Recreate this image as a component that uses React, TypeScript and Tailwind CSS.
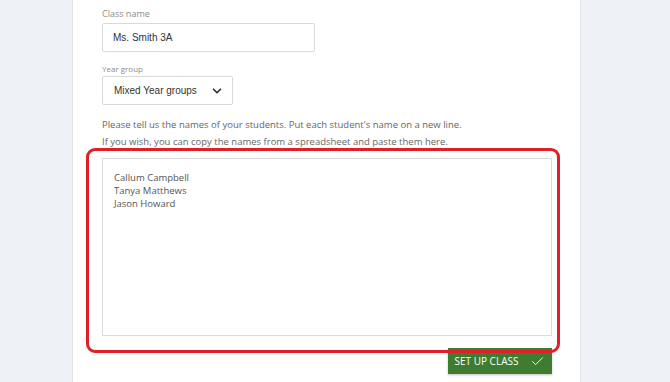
import { ChevronDown, Check } from "lucide-react";

const Names = ["Callum Campbell", "Tanya Matthews", "Jason Howard"];

export default function App() {
  return (
    <div className="h-[382px] w-[670px] overflow-hidden bg-[#eef2f6] pl-[72px] font-['Open_Sans',sans-serif]">
      <div className="relative h-[382px] w-[509px] border-x border-[#dfe4e8] bg-white px-[29px] pt-[8px]">
        <label className="block text-[9px] leading-[12px] text-[#8c8c8c]">Class name</label>
        <div className="mt-[3px] flex h-[29px] w-[213px] items-center rounded-[2px] border border-[#d9d9d9] pl-[10px] font-['Liberation_Sans',sans-serif] text-[10px] text-[#333]">
          Ms. Smith 3A
        </div>

        <label className="mt-[11px] block text-[8px] leading-[12px] text-[#8c8c8c]">Year group</label>
        <div className="mt-[1px] flex h-[29px] w-[131px] items-center justify-between rounded-[2px] border border-[#d9d9d9] pl-[11px] pr-[8px] font-['Liberation_Sans',sans-serif] text-[10px] text-[#333]">
          <span>Mixed Year groups</span>
          <ChevronDown size={14} strokeWidth={3} className="text-[#333]" />
        </div>

        <p className="mt-[11px] text-[9.5px] leading-[17px] text-[#666]">
          Please tell us the names of your students. Put each student's name on a new line.
          <br />
          If you wish, you can copy the names from a spreadsheet and paste them here.
        </p>

        <div className="mt-[8px] h-[178px] w-[450px] border border-[#dcdcdc] px-[11px] pt-[12px] text-[9.5px] leading-[13px] text-[#555]">
          {Names.map((n) => (
            <div key={n}>{n}</div>
          ))}
        </div>

        <div className="mt-[12px] flex w-[450px] justify-end">
          <button
            type="button"
            className="flex h-[26px] w-[104px] items-center justify-center gap-[12px] bg-[#3e7d31] text-[10px] text-white shadow-[0_1px_2px_rgba(0,0,0,0.25)]"
          >
            <span>SET UP CLASS</span>
            <Check size={15} strokeWidth={1.5} />
          </button>
        </div>

        <div className="pointer-events-none absolute left-[13px] top-[148px] h-[205px] w-[474px] rounded-[9px] border-[3.5px] border-[#e11f26]" />
      </div>
    </div>
  );
}
